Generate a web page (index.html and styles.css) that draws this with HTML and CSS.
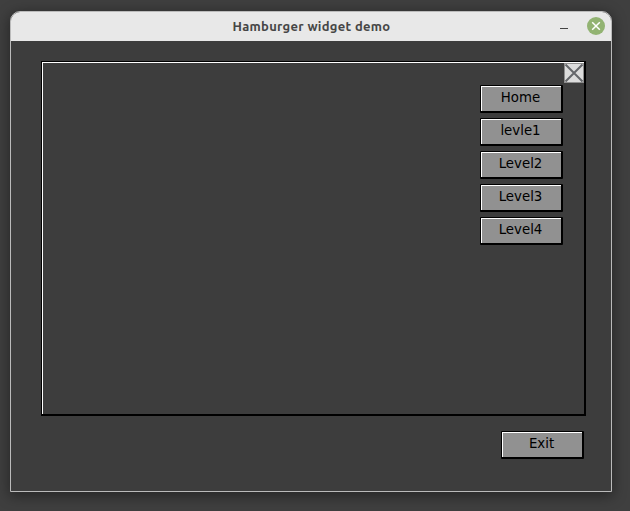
FILE: index.html
```html
<!DOCTYPE html>
<html lang="en">
<head>
<meta charset="utf-8">
<title>Hamburger widget demo</title>
<link rel="stylesheet" href="styles.css">
</head>
<body>
<main class="window">
  <header class="titlebar">
    <h1 class="title">Hamburger widget demo</h1>
    <div class="controls">
      <span class="minimize"></span>
      <svg class="close" width="18" height="18" viewBox="0 0 18 18"><circle cx="9" cy="9" r="9" fill="#92b372"/><path d="M5.200 5.200l7.600 7.600M12.800 5.200l-7.600 7.600" stroke="#fff" stroke-width="1.500"/></svg>
    </div>
  </header>
  <section class="content">
    <div class="panel">
      <nav class="menu">
        <button class="btn">Home</button>
        <button class="btn">levle1</button>
        <button class="btn">Level2</button>
        <button class="btn">Level3</button>
        <button class="btn">Level4</button>
      </nav>
      <svg class="toggle" width="20" height="20" viewBox="0 0 20 20"><rect x=".5" y=".5" width="19" height="19" fill="#dcdcdc" stroke="#8e8e8e"/><path d="M1.500 1.500l17 17M18.500 1.500l-17 17" stroke="#65676b" stroke-width="2"/></svg>
    </div>
    <button class="btn exit">Exit</button>
  </section>
</main>
</body>
</html>
```
FILE: styles.css
```css
* { box-sizing: border-box; }
body {
  margin: 0;
  height: 511px;
  padding: 11px 18px 19px 10px;
  background: #3f3f3f;
  overflow: hidden;
}
.window {
  width: 602px;
  height: 481px;
  border: 1px solid #bbb;
  border-radius: 10px 10px 0 0;
  background: #3d3d3d;
  box-shadow: 0 3px 14px 1px rgba(0, 0, 0, .4);
  overflow: hidden;
}
.titlebar {
  display: grid;
  grid-template-columns: 1fr auto 1fr;
  align-items: center;
  height: 29px;
  padding-bottom: 1px;
  background: #e8e8e8;
}
.title {
  grid-column: 2;
  width: 157px;
  margin: 0;
  font: 600 13px/18px Ubuntu, "Noto Sans", sans-serif;
  letter-spacing: .3px;
  white-space: nowrap;
  color: #464646;
}
.controls {
  display: flex;
  justify-content: flex-end;
  align-items: center;
  gap: 19px;
  padding-right: 6px;
}
.minimize {
  width: 8px;
  height: 1px;
  margin-top: 5px;
  background: #444;
}
.close { display: block; }
.content {
  display: flex;
  flex-direction: column;
  padding: 20px 25px 0 30px;
}
.panel {
  display: flex;
  justify-content: flex-end;
  align-items: flex-start;
  gap: 1px;
  width: 545px;
  height: 355px;
  border: solid #000;
  border-width: 1px 2px 2px 1px;
  box-shadow: inset 1px 1px #fff;
  padding-top: 1px;
}
.menu {
  display: flex;
  flex-direction: column;
  gap: 5px;
  padding-top: 22px;
}
.btn {
  display: block;
  width: 83px;
  height: 28px;
  margin: 0;
  padding: 1px 1px 2px 0;
  border: solid #000;
  border-width: 1px 2px 2px 1px;
  border-radius: 1px;
  background: #919191;
  box-shadow: inset 1px 1px #fff;
  font: 13.333px/22px "DejaVu Sans", sans-serif;
  color: #000;
}
.toggle { display: block; }
.exit {
  align-self: flex-end;
  margin: 15px 2px 0 0;
}
```
